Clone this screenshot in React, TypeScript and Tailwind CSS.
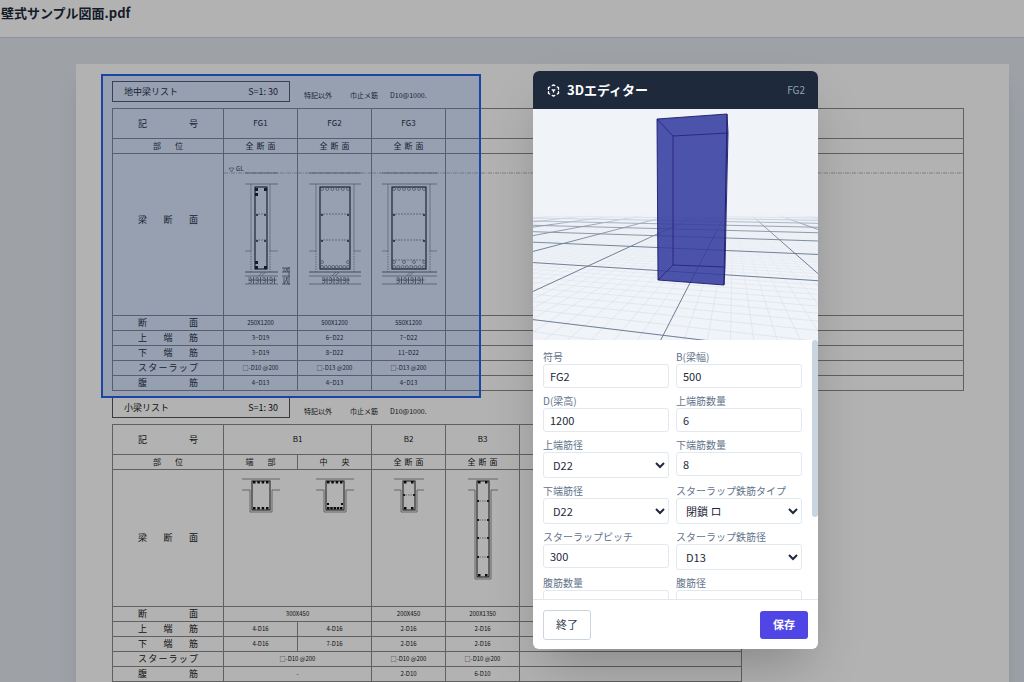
import { useState } from "react";
import type { ReactNode } from "react";

const HORIZON = 90;

const minorA = Array.from({ length: 90 }, (_, i) => 955 + i * 104.5);
const majorA = Array.from({ length: 12 }, (_, i) => 1165 + i * 1045);
const minorB = Array.from({ length: 120 }, (_, i) => 128 + (i - 70) * 23.2);
const majorB = Array.from({ length: 19 }, (_, i) => 128 + (i - 9) * 232);

// floor lines running left to right, they meet far left of the view
const FloorA = ({ d }: { d: number }) => (
  <line x1={0} y1={HORIZON + 140500 / d} x2={285} y2={HORIZON + (140.5 * 1285) / d} />
);

// floor lines running away from the viewer
const FloorB = ({ x }: { x: number }) => (
  <line x1={200} y1={HORIZON} x2={200 + (x - 200) * 1.1} y2={HORIZON + 140.5 * 1.1} />
);

const Scene = () => (
  <svg viewBox="0 0 285 231" preserveAspectRatio="xMidYMid slice" className="block h-[231px] w-full bg-[#f0f4f9]">
    <defs>
      <linearGradient id="fadeMajor" x1="0" y1="0" x2="0" y2="1">
        <stop offset="0.46" stopColor="#000" />
        <stop offset="0.5" stopColor="#aaa" />
        <stop offset="0.6" stopColor="#fff" />
      </linearGradient>
      <linearGradient id="fadeMinor" x1="0" y1="0" x2="0" y2="1">
        <stop offset="0.46" stopColor="#000" />
        <stop offset="0.6" stopColor="#444" />
        <stop offset="0.85" stopColor="#ddd" />
      </linearGradient>
      <mask id="major" maskUnits="userSpaceOnUse" x="0" y="0" width="285" height="231">
        <rect width="285" height="231" fill="url(#fadeMajor)" />
      </mask>
      <mask id="minor" maskUnits="userSpaceOnUse" x="0" y="0" width="285" height="231">
        <rect width="285" height="231" fill="url(#fadeMinor)" />
      </mask>
    </defs>
    <g mask="url(#minor)" stroke="#cbd5e1" strokeWidth="0.5">
      {minorA.map((d) => <FloorA key={d} d={d} />)}
      {minorB.map((x) => <FloorB key={x} x={x} />)}
    </g>
    <g mask="url(#major)" stroke="#64748b" strokeWidth="0.9">
      {majorA.map((d) => <FloorA key={d} d={d} />)}
      {majorB.map((x) => <FloorB key={x} x={x} />)}
    </g>
    <path d="M124 10 194 5 195 24 191 176 125 171Z" fill="#333b9d" fillOpacity="0.87" />
    <g fill="none" stroke="#1e1b6b" strokeWidth="0.9" strokeLinejoin="round">
      <path d="M124 10 194 5 191 176 125 171Z" />
      <path d="M194 5 195 24 192 158 191 176" />
      <path d="M124 10 140 27 195 24M140 27V156L192 158M140 156 125 171" strokeOpacity="0.8" />
    </g>
  </svg>
);

const dots = (from: number, to: number, count: number) =>
  Array.from({ length: count }, (_, i) => from + ((to - from) * i) / (count - 1));

type FoundationProps = { slab: number[]; outer: number[]; rect: number[]; top: number; bottom: number; first?: boolean };

const FoundationSection = ({ slab, outer, rect, top, bottom, first }: FoundationProps) => {
  const [l, r] = rect;
  const mid = (slab[0] + slab[1]) / 2;
  return (
    <svg viewBox="0 0 74 161" className="mx-auto block h-[161px] w-[74px]" fill="none" stroke="#555" strokeWidth="0.6">
      <path d="M0 19H74" strokeDasharray="4 1 1 1" stroke="#888" />
      <path d={`M${slab[0]} 19H${slab[1]}`} />
      <path d={`M${slab[0]} 30H${slab[1]}`} />
      <path d={`M${outer[0]} 30V97H${slab[0]}M${outer[1]} 30V97H${slab[1]}`} stroke="#777" />
      <path d={`M${outer[0]} 97V118M${outer[1]} 97V118`} strokeDasharray="1.5 1" />
      <path d={`M${slab[0]} 118H${slab[1]}`} strokeWidth="0.9" />
      <path d={`M${slab[0]} 122H${slab[1]}M${slab[0]} 130H${slab[1]}`} />
      {/* crushed stone under the footing */}
      {[-13, -6, 1, 8].map((dx) => (
        <path
          key={dx}
          d={`M${mid + dx} 124q3 -1 3 1t-3 1q4 0 3 2t-3 1M${mid + dx + 3} 126h4M${mid + dx + 5} 123v7`}
          strokeWidth="0.8"
        />
      ))}
      <path d={`M${mid - 3} 122l4-4M${mid} 122l4-4`} />
      <rect x={l} y="33" width={r - l} height="82" stroke="#222" strokeWidth="1.2" />
      <path d={`M${l} 60H${r}M${l} 86H${r}`} strokeDasharray="2 1" />
      {[60, 86].map((y) => (
        <path key={y} d={`M${l + 1} ${y + 1}h2M${r - 3} ${y + 1}h2`} stroke="#222" strokeWidth="1.4" />
      ))}
      {first ? (
        <>
          <g fill="#111" stroke="none">
            {[34, 39, 107, 112].map((y) => <rect key={y} x={l} y={y} width="3" height="3" />)}
            <rect x={r - 3} y="34" width="3" height="3" />
            <rect x={r - 3} y="112" width="3" height="3" />
          </g>
          <path d="M5 14h5l-2.500 4z" />
          <path d="M58 114h8M58 118h8M58 122h8M58 130h8M65 113v18M60 114v4M60 123v7M62 114l2 4M62 123l2 7M64 114l-3 4M64 123l-4 7" strokeWidth="0.8" />
          <text x="12" y="17" fontSize="6" fill="#222" stroke="none">GL</text>
        </>
      ) : (
        <>
          {dots(l + 2, r - 2, top).map((x) => <circle key={x} cx={x} cy="35" r="1.5" />)}
          {dots(l + 2, r - 2, 8).map((x) => <circle key={x} cx={x} cy="113" r="1.5" />)}
          {dots(l + 2, r - 2, bottom > 8 ? 4 : 2).map((x) => <circle key={x} cx={x} cy="108" r="1.5" />)}
          {bottom > 8 && <path d={`M${l} 106H${r}`} strokeDasharray="2 1" />}
        </>
      )}
    </svg>
  );
};

type BeamProps = { slab: number[]; rect: number[]; depth: number; count: number; ties?: number[]; extra?: boolean };

const BeamSection = ({ slab, rect, depth, count, ties = [], extra }: BeamProps) => {
  const [l, r] = rect;
  const low = count === 4 && extra ? 5 : count;
  return (
    <svg viewBox="0 0 74 136" className="mx-auto block h-[136px] w-[74px]" fill="none" stroke="#666" strokeWidth="0.7">
      <path d={`M${slab[0]} 9H${slab[1]}M${slab[0]} 20H${l - 2}V${depth + 2}H${r + 2}V20H${slab[1]}`} />
      <rect x={l} y="11" width={r - l} height={depth - 11} stroke="#222" strokeWidth="1" />
      <g fill="#111" stroke="none">
        {dots(l + 1, r - 4, count).map((x) => <rect key={x} x={x} y="11" width="2.500" height="2.500" />)}
        {dots(l + 1, r - 4, low).map((x) => <rect key={x} x={x} y={depth - 3} width="2.500" height="2.500" />)}
        {extra && <path d={`M${l + 1} ${depth - 7}h2v2h-2zM${r - 3} ${depth - 7}h2v2h-2z`} />}
        {ties.map((y) => <path key={y} d={`M${l} ${y - 1}h2v2h-2zM${r - 2} ${y - 1}h2v2h-2z`} />)}
      </g>
      {ties.map((y) => <path key={y} d={`M${l} ${y}H${r}`} strokeDasharray="1.500 1" />)}
    </svg>
  );
};

const Spread = ({ children }: { children: ReactNode }) => (
  <span className="mx-auto block w-[60px] text-[9px] leading-3 [text-align-last:justify]">{children}</span>
);

const SmallSpread = ({ children }: { children: ReactNode }) => (
  <span className="mx-auto block w-[30px] text-[8px] leading-3 [text-align-last:justify]">{children}</span>
);

const Td = ({ children, span }: { children?: ReactNode; span?: number }) => (
  <td colSpan={span} className="border border-[#8a8a8a] p-0 text-center text-[6px] leading-3">{children}</td>
);

const Th = ({ children }: { children: ReactNode }) => (
  <th scope="row" className="border border-[#8a8a8a] p-0 font-normal">{children}</th>
);

const Code = ({ children }: { children: ReactNode }) => <span className="text-[8px]">{children}</span>;

const ListTitle = ({ title }: { title: string }) => (
  <div className="flex h-[21px] items-center gap-[14px]">
    <h2 className="flex h-full w-[178px] items-center justify-between border border-[#555] px-[11px] text-[9px] leading-3">
      <span>{title}</span>
      <span>S=1: 30</span>
    </h2>
    <p className="flex gap-3 self-end text-[7px] leading-[14px]">
      <span className="w-[34px]">特記以外</span>
      <span>巾止メ筋</span>
      <span>D10@1000.</span>
    </p>
  </div>
);

const foundationRows = [
  { label: "断面", values: ["250X1200", "500X1200", "550X1200"] },
  { label: "上端筋", values: ["3−D19", "6−D22", "7−D22"] },
  { label: "下端筋", values: ["3−D19", "8−D22", "11−D22"] },
  { label: "スターラップ", values: ["□-D10 @200", "□-D13 @200", "□-D13 @200"] },
  { label: "腹筋", values: ["4−D13", "4−D13", "4−D13"] },
];

const beamRows = [
  { label: "断面", values: ["300X450", "200X450", "200X1350"] },
  { label: "上端筋", values: ["4-D16", "4-D16", "2-D16", "2-D16"] },
  { label: "下端筋", values: ["4-D16", "7-D16", "2-D16", "2-D16"] },
  { label: "スターラップ", values: ["□-D10 @200", "□-D10 @200", "□-D10 @200"] },
  { label: "腹筋", values: ["-", "2-D10", "6-D10"] },
];

const FoundationTable = () => (
  <table className="w-full table-fixed border-collapse border border-[#555]">
    <colgroup>
      <col className="w-[111px]" />
      <col className="w-[74px]" />
      <col className="w-[74px]" />
      <col className="w-[74px]" />
      <col />
    </colgroup>
    <tbody>
      <tr className="h-[30px]">
        <Th><Spread>記号</Spread></Th>
        <Td><Code>FG1</Code></Td>
        <Td><Code>FG2</Code></Td>
        <Td><Code>FG3</Code></Td>
        <Td />
      </tr>
      <tr className="h-[15px]">
        <Th><SmallSpread>部位</SmallSpread></Th>
        <Td><SmallSpread>全断面</SmallSpread></Td>
        <Td><SmallSpread>全断面</SmallSpread></Td>
        <Td><SmallSpread>全断面</SmallSpread></Td>
        <Td />
      </tr>
      <tr className="h-[162px]">
        <Th>
          <div className="pb-[30px]">
            <Spread>梁断面</Spread>
          </div>
        </Th>
        <Td><FoundationSection first slab={[21, 54]} outer={[27, 46]} rect={[31, 43]} top={3} bottom={3} /></Td>
        <Td><FoundationSection slab={[11, 63]} outer={[18, 56]} rect={[22, 52]} top={6} bottom={8} /></Td>
        <Td><FoundationSection slab={[10, 65]} outer={[16, 58]} rect={[20, 54]} top={7} bottom={11} /></Td>
        <Td>
          <svg className="block h-[161px] w-full">
            <line x1="0" y1="19" x2="100%" y2="19" stroke="#888" strokeWidth="0.6" strokeDasharray="4 1 1 1" />
          </svg>
        </Td>
      </tr>
      {foundationRows.map((row) => (
        <tr key={row.label} className="h-[15px]">
          <Th><Spread>{row.label}</Spread></Th>
          {row.values.map((value, i) => <Td key={i}>{value}</Td>)}
          <Td />
        </tr>
      ))}
    </tbody>
  </table>
);

const BeamTable = () => (
  <table className="w-[630px] table-fixed border-collapse border border-[#555]">
    <colgroup>
      <col className="w-[111px]" />
      <col className="w-[74px]" />
      <col className="w-[74px]" />
      <col className="w-[74px]" />
      <col className="w-[74px]" />
      <col />
    </colgroup>
    <tbody>
      <tr className="h-[30px]">
        <Th><Spread>記号</Spread></Th>
        <Td span={2}><Code>B1</Code></Td>
        <Td><Code>B2</Code></Td>
        <Td><Code>B3</Code></Td>
        <Td />
      </tr>
      <tr className="h-[15px]">
        <Th><SmallSpread>部位</SmallSpread></Th>
        <Td><SmallSpread>端部</SmallSpread></Td>
        <Td><SmallSpread>中央</SmallSpread></Td>
        <Td><SmallSpread>全断面</SmallSpread></Td>
        <Td><SmallSpread>全断面</SmallSpread></Td>
        <Td />
      </tr>
      <tr className="h-[137px]">
        <Th><Spread>梁断面</Spread></Th>
        <Td span={2}>
          <div className="grid grid-cols-2">
            <BeamSection slab={[18, 56]} rect={[28, 46]} depth={40} count={4} />
            <BeamSection slab={[18, 56]} rect={[28, 46]} depth={40} count={4} extra />
          </div>
        </Td>
        <Td><BeamSection slab={[22, 52]} rect={[31, 43]} depth={40} count={2} ties={[25]} /></Td>
        <Td><BeamSection slab={[22, 52]} rect={[31, 43]} depth={107} count={2} ties={[31, 50, 68, 87]} /></Td>
        <Td />
      </tr>
      {beamRows.map((row) => (
        <tr key={row.label} className="h-[15px]">
          <Th><Spread>{row.label}</Spread></Th>
          {row.values.map((value, i) => (
            <Td key={i} span={row.values.length === 3 && i === 0 ? 2 : 1}>{value}</Td>
          ))}
          <Td />
        </tr>
      ))}
    </tbody>
  </table>
);

const diameters = ["D10", "D13", "D16", "D19", "D22", "D25"];

type FieldDef = { id: string; label: string; options?: string[] };

const fields: FieldDef[] = [
  { id: "mark", label: "符号" },
  { id: "width", label: "B(梁幅)" },
  { id: "height", label: "D(梁高)" },
  { id: "topCount", label: "上端筋数量" },
  { id: "topDia", label: "上端筋径", options: diameters },
  { id: "bottomCount", label: "下端筋数量" },
  { id: "bottomDia", label: "下端筋径", options: diameters },
  { id: "stirrupType", label: "スターラップ鉄筋タイプ", options: ["閉鎖 ロ", "開放 コ"] },
  { id: "pitch", label: "スターラップピッチ" },
  { id: "stirrupDia", label: "スターラップ鉄筋径", options: diameters },
  { id: "webCount", label: "腹筋数量" },
  { id: "webDia", label: "腹筋径" },
];

const Editor = () => {
  const [beam, setBeam] = useState<Record<string, string>>({
    mark: "FG2",
    width: "500",
    height: "1200",
    topCount: "6",
    topDia: "D22",
    bottomCount: "8",
    bottomDia: "D22",
    stirrupType: "閉鎖 ロ",
    pitch: "300",
    stirrupDia: "D13",
    webCount: "",
    webDia: "",
  });

  const change = (id: string, value: string) => setBeam((prev) => ({ ...prev, [id]: value }));

  return (
    <div
      role="dialog"
      aria-labelledby="editor-title"
      className="absolute top-[71px] right-[206px] w-[285px] overflow-hidden rounded-md bg-white shadow-2xl"
    >
      <div className="flex h-[38px] items-center gap-[6px] bg-[#1e293b] px-[13px] text-white">
        <svg viewBox="0 0 24 24" className="size-[15px]" fill="none" stroke="currentColor" strokeWidth="2.2" strokeLinecap="round" strokeLinejoin="round">
          <path d="M6 17.600l-2-1.100V14M4 10V7.500l2-1.100M10 4.100 12 3l2 1.100M18 6.400l2 1.100V10M20 14v2.500l-2 1.120M14 19.900 12 21l-2-1.100M12 12l2-1.100M12 12v2.500M12 12l-2-1.120" />
        </svg>
        <h2 id="editor-title" className="text-[13px] leading-5 font-bold">3Dエディター</h2>
        <span className="ml-auto text-[10px] leading-4 text-slate-400">{beam.mark}</span>
      </div>
      <Scene />
      <div className="relative">
        <form className="grid h-[259px] grid-cols-2 content-start items-start gap-x-[7px] gap-y-[6px] overflow-y-auto pt-[10px] pr-4 pl-[10px] [scrollbar-width:none]">
          {fields.map(({ id, label, options }) => (
            <div key={id}>
              <label htmlFor={id} className="block text-[10px] leading-[14px] text-[#64748b]">{label}</label>
              {options ? (
                <select
                  id={id}
                  value={beam[id]}
                  onChange={(e) => change(id, e.target.value)}
                  className="block h-[26px] w-full rounded-[3px] border border-[#e2e8f0] bg-white px-[5px] text-[11px] text-[#1e293b]"
                >
                  {options.map((o) => <option key={o}>{o}</option>)}
                </select>
              ) : (
                <input
                  id={id}
                  value={beam[id]}
                  onChange={(e) => change(id, e.target.value)}
                  className="block h-6 w-full rounded-[3px] border border-[#e2e8f0] bg-white px-[6px] text-[11px] text-[#1e293b]"
                />
              )}
            </div>
          ))}
        </form>
        <div className="absolute top-0 right-0 h-[177px] w-[6px] rounded-full bg-slate-300" />
      </div>
      <div className="flex h-[50px] items-center justify-between border-t border-[#e2e8f0] px-[10px]">
        <button className="h-[30px] rounded-[3px] border border-slate-300 px-3 text-[11px] text-[#334155]">終了</button>
        <button className="h-7 rounded-[3px] bg-[#4f46e5] px-[13px] text-[11px] font-bold text-white">保存</button>
      </div>
    </div>
  );
};

const App = () => {
  return (
    <div className="relative flex h-screen flex-col overflow-hidden bg-slate-200 font-['Noto_Sans_CJK_JP',sans-serif] text-[#1e293b]">
      <header className="h-[38px] shrink-0 border-b border-slate-300 bg-white px-px py-[3px]">
        <h1 className="text-[13px] leading-5 font-bold">壁式サンプル図面.pdf</h1>
      </header>
      <main className="pt-[26px] pr-[15px] pl-[76px]">
        <div className="relative bg-white pt-[17px] pr-[45px] pb-10 pl-9 text-neutral-900 shadow-xl">
          <ListTitle title="地中梁リスト" />
          <div className="mt-[6px] mb-[6px]">
            <FoundationTable />
          </div>
          <ListTitle title="小梁リスト" />
          <div className="mt-[6px]">
            <BeamTable />
          </div>
          <div className="absolute top-[10px] left-[25px] h-[324px] w-[380px] border-2 border-[#2563eb] bg-[#3b82f6]/20" />
        </div>
      </main>
      <div className="absolute inset-0 bg-black/30" />
      <Editor />
    </div>
  );
};

export default App;
